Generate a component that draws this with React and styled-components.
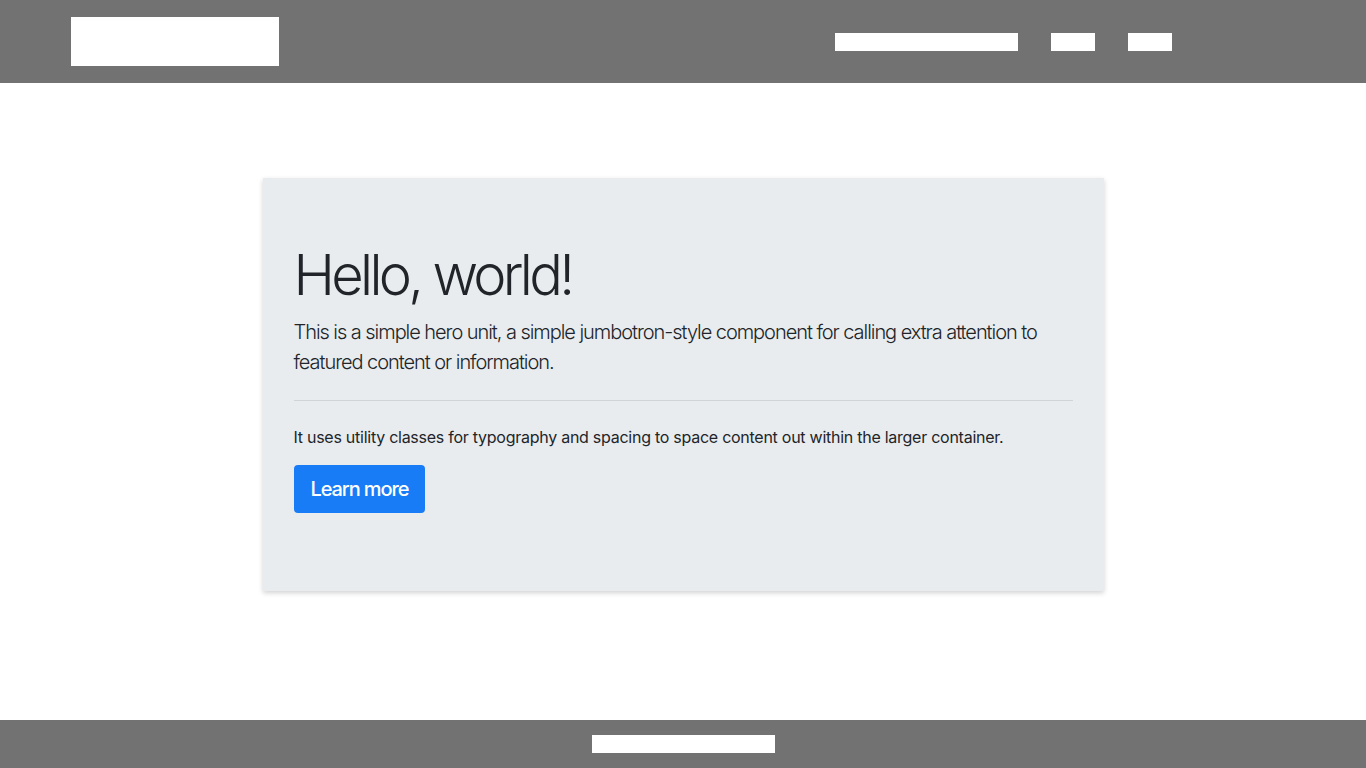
import React from "react";
import styled, { createGlobalStyle } from "styled-components";

const Global = createGlobalStyle`
  * { box-sizing: border-box; }
  html, body { margin: 0; padding: 0; }
  body {
    font-family: Inter, "Noto Sans", "Liberation Sans", sans-serif;
    color: #212529;
    background: #ffffff;
  }
`;

const Page = styled.div`
  min-height: 100vh;
  display: flex;
  flex-direction: column;
`;

const Header = styled.header`
  height: 83px;
  background: #727272;
  display: flex;
  align-items: flex-start;
  justify-content: space-between;
  padding: 17px 194px 0 71px;
`;

const Logo = styled.div`
  width: 208px;
  height: 49px;
  background: #ffffff;
`;

const Nav = styled.nav`
  display: flex;
  gap: 33px;
  margin-top: 16px;
`;

const NavBlock = styled.div`
  width: ${(p) => p.w}px;
  height: 18px;
  background: #ffffff;
`;

const Main = styled.main`
  flex: 1;
  display: flex;
  justify-content: center;
  align-items: flex-start;
  padding-top: 95px;
`;

const Jumbotron = styled.section`
  width: 841px;
  background: #e9ecef;
  padding: 64px 31px 61px;
  box-shadow: 0 2px 5px rgba(0, 0, 0, 0.18);
`;

const Title = styled.h1`
  margin: 0 0 8px;
  font-size: 56px;
  font-weight: 300;
  line-height: 1.2;
  letter-spacing: -3.7px;
`;

const Lead = styled.p`
  margin: 0 0 16px;
  font-size: 20px;
  font-weight: 300;
  line-height: 30px;
  letter-spacing: -1.05px;
`;

const Divider = styled.hr`
  margin: 23px 0 24px;
  border: 0;
  border-top: 1px solid rgba(0, 0, 0, 0.1);
`;

const Text = styled.p`
  margin: 0 0 16px;
  font-size: 16px;
  line-height: 24px;
  letter-spacing: -0.26px;
`;

const Button = styled.a`
  display: inline-block;
  padding: 8px 17px;
  font-size: 20px;
  line-height: 32px;
  font-weight: 500;
  color: #ffffff;
  background: #187cf6;
  border-radius: 4px;
  text-decoration: none;
  letter-spacing: -1.1px;
`;

const ButtonRow = styled.p`
  margin: 0 0 17px;
`;

const Footer = styled.footer`
  height: 48px;
  background: #727272;
  display: flex;
  justify-content: center;
  align-items: center;
`;

const FooterBlock = styled.div`
  width: 183px;
  height: 18px;
  background: #ffffff;
`;

export default function App() {
  return (
    <>
      <Global />
      <Page>
        <Header>
          <Logo />
          <Nav>
            <NavBlock w={183} />
            <NavBlock w={44} />
            <NavBlock w={44} />
          </Nav>
        </Header>
        <Main>
          <Jumbotron>
            <Title>Hello, world!</Title>
            <Lead>
              This is a simple hero unit, a simple jumbotron-style component for calling extra
              attention to featured content or information.
            </Lead>
            <Divider />
            <Text>
              It uses utility classes for typography and spacing to space content out within the
              larger container.
            </Text>
            <ButtonRow>
              <Button href="#">Learn more</Button>
            </ButtonRow>
          </Jumbotron>
        </Main>
        <Footer>
          <FooterBlock />
        </Footer>
      </Page>
    </>
  );
}
